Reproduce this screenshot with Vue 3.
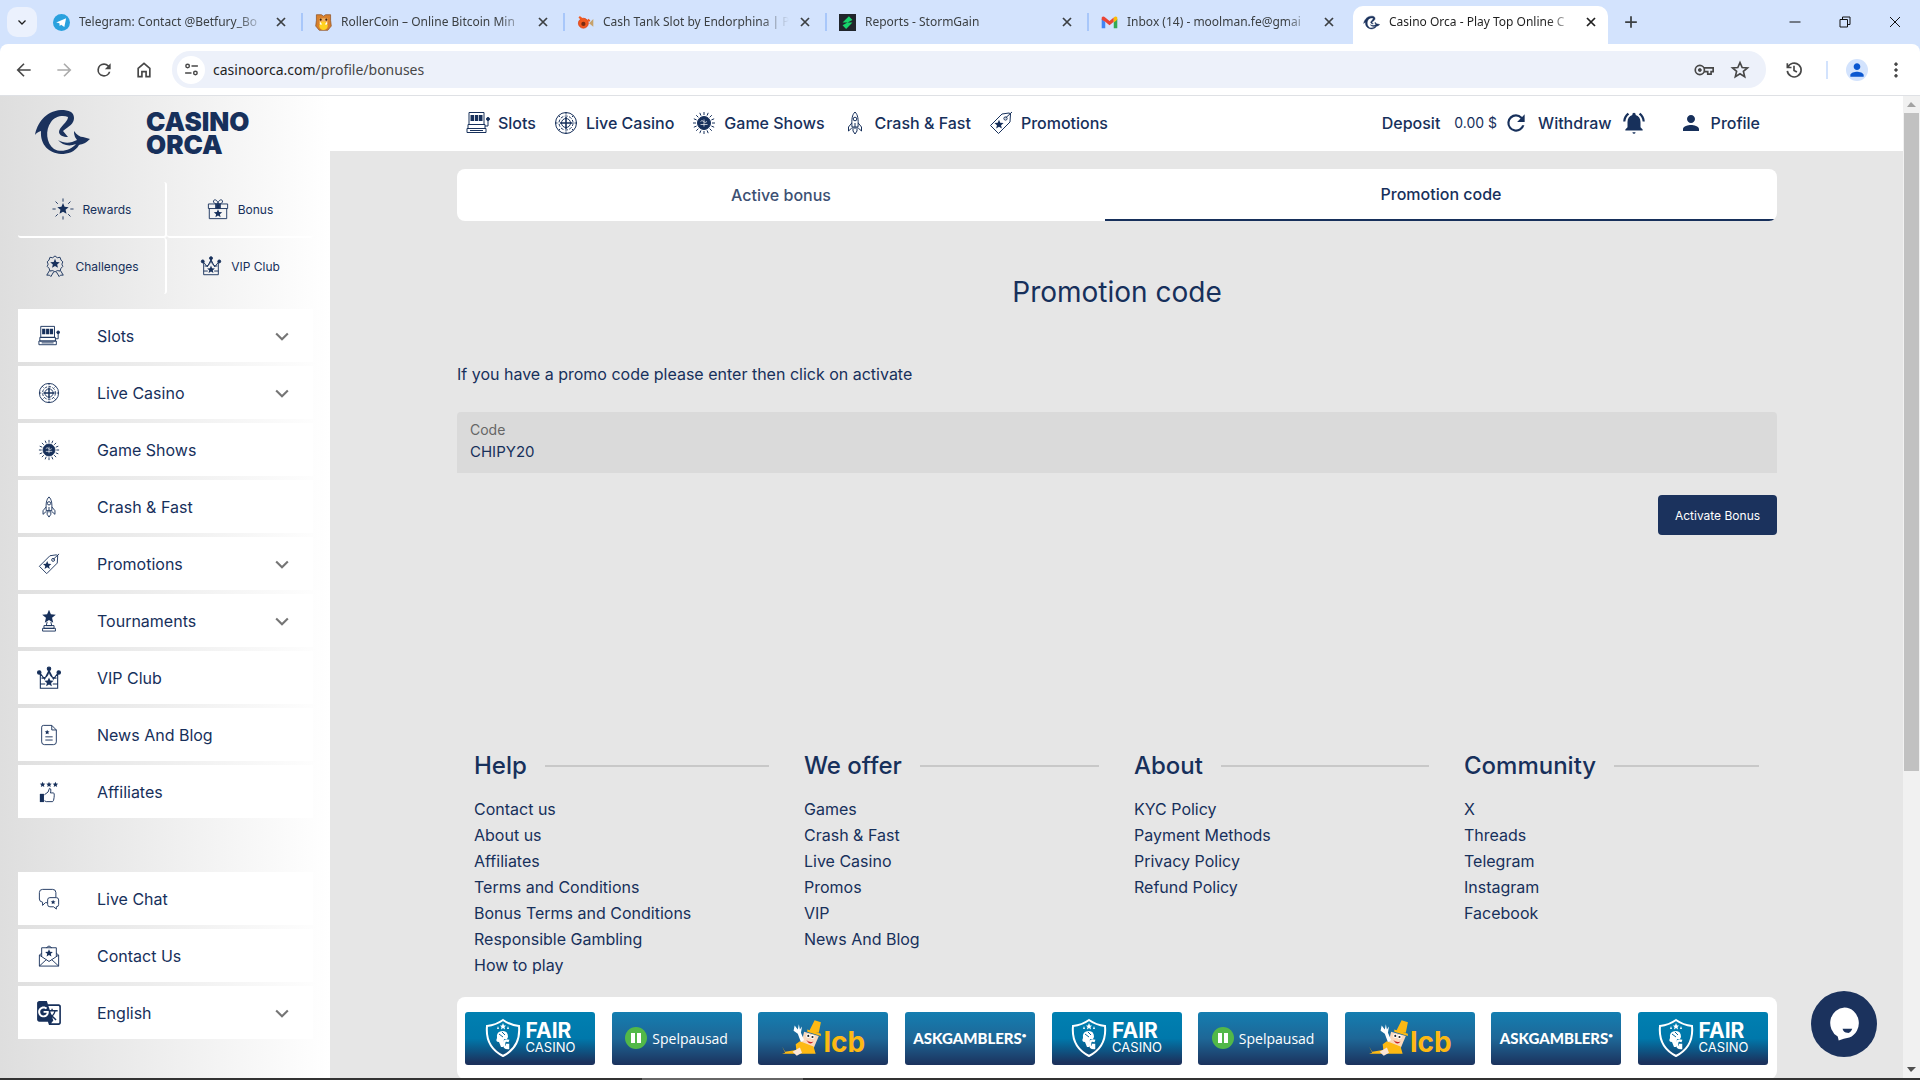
<script setup>
import { ref } from 'vue'

const code = ref('CHIPY20')

const star = (cx, cy, r) => {
  const pts = []
  for (let i = 0; i < 10; i++) {
    const a = (Math.PI / 5) * i - Math.PI / 2
    const d = i % 2 ? r * 0.45 : r
    pts.push((cx + d * Math.cos(a)).toFixed(2) + ',' + (cy + d * Math.sin(a)).toFixed(2))
  }
  return `<polygon points="${pts.join(' ')}" fill="currentColor" stroke="none"/>`
}

const rays = (count, from, to) => {
  let d = ''
  for (let i = 0; i < count; i++) {
    const a = (Math.PI * 2 * i) / count
    const c = Math.cos(a)
    const s = Math.sin(a)
    d += `M${(12 + from * c).toFixed(2)} ${(12 + from * s).toFixed(2)}L${(12 + to * c).toFixed(2)} ${(12 + to * s).toFixed(2)}`
  }
  return `<path d="${d}"/>`
}

const solid = (d) => `<path d="${d}" fill="currentColor" stroke="none"/>`

const orcaPath =
  'M0 25C2 14 10 1 26 0C34 0 39 2 39 8C39 14 34 16 28 21L33 27C28 27 24 25 24 22C24 17 33 12 33 7C28 5 20 6 16 12C10 20 11 33 19 39C26 43 36 40 41 34C34 37 27 35 23 30C30 34 36 33 42 30L40 27C39 24 39 23 39 21C42 25 45 27 48 27L55 29C51 33 48 34 44 35C40 42 33 44 26 44C14 43 5 35 6 21C3 22 1 23 0 25Z'

const crown =
  '<path d="M4 21.500V8l4 5 4-8 4 8 4-5v13.500zM4 17.500h4.500M15.500 17.500H20M5 12q5 1 7-6q2 7 7 6"/><circle cx="3" cy="7" r="1.600" fill="currentColor"/><circle cx="12" cy="3.500" r="1.600" fill="currentColor"/><circle cx="21" cy="7" r="1.600" fill="currentColor"/>' +
  star(12, 16, 4.5)

const icons = {
  rewards: rays(8, 8, 11.5) + star(12, 12, 6.5),
  bonus:
    '<path d="M1.500 6.500h21v5h-21zM2.500 11.500v11h19v-11M9.500 6.500v5M14.500 6.500v5M12 6.500C8 7 6 4 7.500 2.500S12 3 12 6.500C12 3 15 1 16.500 2.500S16 7 12 6.500"/><path d="M10 7h4v4h-4z" fill="currentColor"/>' +
    star(12, 17, 4.8),
  challenges:
    '<path d="M12 1l2.500 2 3-.5 1 3 2 2-1 2.500 1 2.500-2 2-1 3-3-.5-2.500 1.500-2.500-1.500-3 .5-1-3-2-2 1-2.500-1-2.500 2-2 1-3 3 .5zM6 17l-3 5h3l1.500 1.500 3-5M18 17l3 5h-3l-1.500 1.500-3-5"/>' +
    star(12, 9.5, 5.5),
  crown,
  slots:
    '<path d="M3 1.500h15v12H3zM2 13.500h17v4H2zM1 17.500h19v4H1zM4 19.500h13M19 15h3V8"/><circle cx="22" cy="8" r="1.500" fill="currentColor"/>' +
    solid('M4.500 4h3.500v6H4.500zM8.800 4h3.500v6H8.800zM13 4h3.500v6H13z'),
  live:
    '<circle cx="12" cy="12" r="10.500"/><circle cx="12" cy="12" r="7" stroke-dasharray="3 1.500"/><circle cx="12" cy="12" r="4.500"/><path d="M12 6v12M6 12h12" stroke-width="1.600"/>' +
    rays(8, 8.5, 10.5),
  shows:
    rays(16, 8, 11) +
    '<circle cx="12" cy="12" r="6.500" fill="currentColor"/><path d="M8.500 10.500q1.500-2 3 0t3.500 0M8.500 13.500h7M12 8.500v7" stroke="#fff" stroke-width=".7"/>',
  rocket:
    '<path d="M12 1c-3 3-3.500 7-3 15h6c.5-8 0-12-3-15zM8.800 12L5.500 16v4l3.300-3M15.200 12l3.300 4v4l-3.300-3M10 16v4l2 3 2-3v-4M12 12v6"/><circle cx="12" cy="8" r="1.800"/>',
  promo:
    '<path d="M1.500 14.500L13 3l7-1 1.500.8L21 11 9.500 22.500zM16.500 7L23 1"/><circle cx="16.500" cy="7.500" r="1.600"/>' +
    star(10, 13.5, 4.8),
  trophy:
    star(12, 7.5, 7.8) + '<path d="M10 13l-1 4h6l-1-4M6.500 17h11v3h-11zM5 20h14v3H5z"/>',
  news:
    '<path d="M4 3.500q0-2 2-2h9l5 5v13q0 3-3 3H7q-3 0-3-3zM15 1.500v5h5M8 14h8M8 17.500h8"/>' + star(10, 9, 2.8),
  affiliates:
    star(5, 4, 3.2) + star(12, 4, 3.2) + star(19, 4, 3.2) +
    '<path d="M7 15l4-3 1.500-4q2 0 1.500 3l-.5 2H17q1.500 1 0 8l-1 1.500H9l-2-1"/>' +
    solid('M2 14h4.500v9H2z'),
  chat:
    '<path d="M10 16H8l-3 3v-3.500Q1.500 15 1.500 12V5q0-3.500 3.500-3.500h11q3.500 0 3.500 3.500v5M13 10.500h7q2.500 0 2.500 2.500v5q0 2.500-2.500 2.500v2.500l-3-2.500h-4q-2.500 0-2.500-2.500v-5q0-2.500 2.500-2.500z"/>' +
    star(16.5, 15.5, 2.8),
  mail:
    '<path d="M4 9L1.500 11v12h21V11L20 9M4 12.500V3h16v9.500M1.500 11l10.500 7 10.500-7M1.500 23L9 16M22.500 23L15 16M9 3l3-2 3 2"/>' +
    star(12, 9, 4.5),
  translate: solid(
    'M21 4H11l-1-3H3c-1.100 0-2 .9-2 2v15c0 1.100.9 2 2 2h8l1 3h9c1.100 0 2-.9 2-2V6c0-1.100-.9-2-2-2zM7 16c-2.760 0-5-2.240-5-5s2.240-5 5-5c1.350 0 2.480.5 3.350 1.300L9.030 8.570c-.38-.36-1.040-.78-2.030-.78-1.740 0-3.150 1.440-3.150 3.210S5.260 14.210 7 14.210c2.010 0 2.840-1.440 2.920-2.410H7v-1.710h4.680c.07.31.12.61.12 1.020C11.800 13.970 9.890 16 7 16zm6.170-5.420h3.700c-.43 1.250-1.110 2.430-2.050 3.470-.31-.35-.6-.72-.86-1.100l-.79-2.370zm8.330 9.920c0 .55-.45 1-1 1H14l2-2.500-1.040-3.100 3.100 3.100.92-.92-3.300-3.250.02-.02c1.130-1.250 1.930-2.690 2.400-4.220H20v-1.300h-4.530V8h-1.290v1.290h-1.440L11.460 5.500h9.040c.55 0 1 .45 1 1v14z'
  ),
  refresh: solid(
    'M17.650 6.350A7.958 7.958 0 0 0 12 4a8 8 0 1 0 7.730 10h-2.080A6 6 0 1 1 12 6c1.660 0 3.140.69 4.220 1.780L13 11h7V4l-2.350 2.350z'
  ),
  bell: solid(
    'M7.580 4.080L6.150 2.650C3.750 4.480 2.170 7.300 2.030 10.500h2c.15-2.650 1.510-4.970 3.550-6.420zm12.390 6.420h2c-.15-3.200-1.730-6.020-4.120-7.850l-1.420 1.430c2.020 1.450 3.390 3.770 3.540 6.420zM18 11c0-3.070-1.640-5.640-4.500-6.320V4c0-.83-.67-1.500-1.500-1.500s-1.500.67-1.500 1.500v.68C7.630 5.360 6 7.920 6 11v5l-2 2v1h16v-1l-2-2v-5zM10.500 20.500h3q-.3 1.500-1.500 1.500t-1.500-1.500z'
  ),
  person: solid(
    'M12 12c2.210 0 4-1.790 4-4s-1.790-4-4-4-4 1.790-4 4 1.790 4 4 4zm0 2c-2.670 0-8 1.340-8 4v2h16v-2c0-2.660-5.330-4-8-4z'
  ),
  down: '<path d="M5 9l7 7 7-7" stroke-width="2.500"/>',
  back: '<path d="M20 12H5M12 4.500L4.500 12l7.500 7.500" stroke-width="2"/>',
  forward: '<path d="M4 12h15M12 4.500l7.500 7.500-7.500 7.500" stroke-width="2"/>',
  home: '<path d="M5 10l7-6 7 6v10h-4.500v-6h-5v6H5z" stroke-width="2"/>',
  tune:
    '<circle cx="6.500" cy="7" r="2.500" stroke-width="2"/><circle cx="17.500" cy="17" r="2.500" stroke-width="2"/><path d="M12 7h9M3 17h9" stroke-width="2"/>',
  key:
    '<circle cx="7" cy="12" r="5.500" stroke-width="2"/><circle cx="7" cy="12" r="1.800" fill="currentColor"/><path d="M12 9.500h11v4.500h-2.500v3h-4v-3H12" stroke-width="2"/>',
  bookmark:
    '<path d="M12 3l2.600 6 6.400.5-4.900 4.200 1.500 6.300L12 16.600 6.400 20l1.500-6.300L3 9.500 9.400 9z" stroke-width="2"/>',
  history:
    '<path d="M4 4v5h5M4.500 9A8.300 8.300 0 1 1 4 13M12 7v5.500l3.500 2" stroke-width="2"/>',
  dots:
    '<circle cx="12" cy="5" r="1.600" fill="currentColor"/><circle cx="12" cy="12" r="1.600" fill="currentColor"/><circle cx="12" cy="19" r="1.600" fill="currentColor"/>',
  cross: '<path d="M4 4l16 16M20 4L4 20" stroke-width="3.500"/>',
  thinCross: '<path d="M2 2l20 20M22 2L2 22" stroke-width="2"/>',
  plus: '<path d="M12 2v20M2 12h20" stroke-width="3"/>',
  minimize: '<path d="M1 12h22" stroke-width="2"/>',
  restore: '<path d="M2 7h15v15H2zM7 7V2h15v15h-5" stroke-width="2"/>',
  telegram:
    '<circle cx="12" cy="12" r="12" fill="#2aa1de" stroke="none"/><path d="M4.500 12L18.500 6l-2.500 12.500-4.500-3.500-2 2-.5-4z" fill="#fff" stroke="none"/>',
  hamster:
    '<path d="M2 1h7l3 2 3-2h7v8l1 8-5 6H6l-5-6 1-8z" fill="#d8802c" stroke="#8b4e20"/><path d="M6 6h12v6H6z" fill="#f2b05a" stroke="none"/><circle cx="8" cy="8" r="1.500" fill="#3b1f0c" stroke="none"/><circle cx="16" cy="8" r="1.500" fill="#3b1f0c" stroke="none"/><circle cx="12" cy="16.500" r="6" fill="#ffd21f" stroke="none"/><path d="M7 12l2 3M17 12l-2 3" stroke="#fff" stroke-width="2"/>',
  slotFish:
    '<circle cx="9" cy="13" r="7" fill="#f0591f" stroke="#d63c17"/><circle cx="9" cy="14" r="3" fill="#7a2b12" stroke="none"/><path d="M3 4l5 4M15 8l3 2" stroke="#f0591f" stroke-width="3"/><path d="M17 13l6-6v11z" fill="#c7a26b" stroke="none"/>',
  storm:
    '<path d="M0 0h24v24H0z" fill="#20252b" stroke="none"/><path d="M14 3L5 12h7L19 8.500zM10 21l9-9h-7l-7 4z" fill="#17d46b" stroke="none"/>',
  gmail:
    '<path d="M1 20V7l5 4v9z" fill="#4285f4" stroke="none"/><path d="M18 20v-9l5-4v13z" fill="#34a853" stroke="none"/><path d="M1 8V5q2-3 5 0l6 5 6-5v6l-6 5-6-5z" fill="#ea4335" stroke="none"/><path d="M18 5q3-3 5 0v3l-5 4z" fill="#fbbc04" stroke="none"/>',
  orca: `<path transform="translate(1 3) scale(.41)" d="${orcaPath}" fill="#1b325d" stroke="#1b325d" stroke-width="1.500"/>`,
}

const tabs = [
  { icon: 'telegram', title: 'Telegram: Contact @Betfury_Bo' },
  { icon: 'hamster', title: 'RollerCoin – Online Bitcoin Min' },
  { icon: 'slotFish', title: 'Cash Tank Slot by Endorphina | P' },
  { icon: 'storm', title: 'Reports - StormGain' },
  { icon: 'gmail', title: 'Inbox (14) - moolman.fe@gmai' },
  { icon: 'orca', title: 'Casino Orca - Play Top Online C', active: true },
]

const quick = [
  { icon: 'rewards', label: 'Rewards' },
  { icon: 'bonus', label: 'Bonus' },
  { icon: 'challenges', label: 'Challenges' },
  { icon: 'crown', label: 'VIP Club' },
]

const menus = [
  [
    { icon: 'slots', label: 'Slots', open: true },
    { icon: 'live', label: 'Live Casino', open: true },
    { icon: 'shows', label: 'Game Shows' },
    { icon: 'rocket', label: 'Crash & Fast' },
    { icon: 'promo', label: 'Promotions', open: true },
    { icon: 'trophy', label: 'Tournaments', open: true },
    { icon: 'crown', label: 'VIP Club', big: true },
    { icon: 'news', label: 'News And Blog' },
    { icon: 'affiliates', label: 'Affiliates' },
  ],
  [
    { icon: 'chat', label: 'Live Chat' },
    { icon: 'mail', label: 'Contact Us' },
    { icon: 'translate', label: 'English', open: true, big: true },
  ],
]

const topNav = menus[0].slice(0, 5)

const columns = [
  {
    title: 'Help',
    links: ['Contact us', 'About us', 'Affiliates', 'Terms and Conditions', 'Bonus Terms and Conditions', 'Responsible Gambling', 'How to play'],
  },
  { title: 'We offer', links: ['Games', 'Crash & Fast', 'Live Casino', 'Promos', 'VIP', 'News And Blog'] },
  { title: 'About', links: ['KYC Policy', 'Payment Methods', 'Privacy Policy', 'Refund Policy'] },
  { title: 'Community', links: ['X', 'Threads', 'Telegram', 'Instagram', 'Facebook'] },
]

const partners = ['fair', 'spel', 'lcb', 'ask', 'fair', 'spel', 'lcb', 'ask', 'fair']
</script>

<template>
  <div class="window">
    <div class="tabstrip">
      <button class="tab-search" aria-label="Search tabs"><svg class="ico s12" viewBox="0 0 24 24" v-html="icons.down"></svg></button>
      <div class="tabs">
        <div v-for="t in tabs" :key="t.title" class="tab" :class="{ active: t.active }">
          <svg class="ico s17" viewBox="0 0 24 24" v-html="icons[t.icon]"></svg>
          <span class="tab-title">{{ t.title }}</span>
          <button class="plain" aria-label="Close tab"><svg class="ico s12" viewBox="0 0 24 24" v-html="icons.cross"></svg></button>
        </div>
      </div>
      <button class="plain new-tab" aria-label="New tab"><svg class="ico s14" viewBox="0 0 24 24" v-html="icons.plus"></svg></button>
      <div class="win-controls">
        <button class="plain" aria-label="Minimize"><svg class="ico s12" viewBox="0 0 24 24" v-html="icons.minimize"></svg></button>
        <button class="plain" aria-label="Restore"><svg class="ico s12" viewBox="0 0 24 24" v-html="icons.restore"></svg></button>
        <button class="plain" aria-label="Close"><svg class="ico s12" viewBox="0 0 24 24" v-html="icons.thinCross"></svg></button>
      </div>
    </div>

    <div class="toolbar">
      <div class="nav-buttons">
        <button class="plain" aria-label="Back"><svg class="ico s20" viewBox="0 0 24 24" v-html="icons.back"></svg></button>
        <button class="plain dim" aria-label="Forward"><svg class="ico s20" viewBox="0 0 24 24" v-html="icons.forward"></svg></button>
        <button class="plain" aria-label="Reload"><svg class="ico s20" viewBox="0 0 24 24" v-html="icons.refresh"></svg></button>
        <button class="plain" aria-label="Home"><svg class="ico s20" viewBox="0 0 24 24" v-html="icons.home"></svg></button>
      </div>
      <div class="omnibox">
        <span class="site-info"><svg class="ico s17" viewBox="0 0 24 24" v-html="icons.tune"></svg></span>
        <span class="url"><b>casinoorca.com</b>/profile/bonuses</span>
        <svg class="ico s20" viewBox="0 0 24 24" v-html="icons.key"></svg>
        <svg class="ico s20" viewBox="0 0 24 24" v-html="icons.bookmark"></svg>
      </div>
      <div class="toolbar-end">
        <button class="plain" aria-label="History"><svg class="ico s20" viewBox="0 0 24 24" v-html="icons.history"></svg></button>
        <span class="divider"></span>
        <button class="plain avatar" aria-label="Account"><svg class="ico s20" viewBox="0 0 24 24" v-html="icons.person"></svg></button>
        <button class="plain" aria-label="Menu"><svg class="ico s20" viewBox="0 0 24 24" v-html="icons.dots"></svg></button>
      </div>
    </div>

    <div class="page">
      <aside class="sidebar">
        <a class="brand" href="#">
          <svg class="orca" viewBox="0 0 55 44"><path :d="orcaPath" fill="#1b325d" /></svg>
          <span class="brand-name">CASINO<br />ORCA</span>
        </a>
        <nav class="quick">
          <a v-for="q in quick" :key="q.label" href="#">
            <svg class="ico s22" viewBox="0 0 24 24" v-html="icons[q.icon]"></svg>
            <span>{{ q.label }}</span>
          </a>
        </nav>
        <nav v-for="(group, i) in menus" :key="i" class="menu">
          <a v-for="m in group" :key="m.label" href="#">
            <span class="menu-icon"><svg class="ico" :class="m.big ? 's26' : 's22'" viewBox="0 0 24 24" v-html="icons[m.icon]"></svg></span>
            <span class="menu-label">{{ m.label }}</span>
            <svg v-if="m.open" class="ico s20 chevron" viewBox="0 0 24 24" v-html="icons.down"></svg>
          </a>
        </nav>
      </aside>

      <div class="content">
        <header class="topbar">
          <nav class="topnav">
            <a v-for="n in topNav" :key="n.label" href="#">
              <svg class="ico s24" viewBox="0 0 24 24" v-html="icons[n.icon]"></svg>{{ n.label }}
            </a>
          </nav>
          <div class="account">
            <a href="#">Deposit</a>
            <span class="balance">0.00 $</span>
            <button class="plain" aria-label="Refresh balance"><svg class="ico s26" viewBox="0 0 24 24" v-html="icons.refresh"></svg></button>
            <a class="withdraw" href="#">Withdraw</a>
            <button class="plain" aria-label="Notifications"><svg class="ico s26" viewBox="0 0 24 24" v-html="icons.bell"></svg></button>
            <a class="profile" href="#"><svg class="ico s24" viewBox="0 0 24 24" v-html="icons.person"></svg>Profile</a>
          </div>
        </header>

        <main class="main">
          <div class="switch" role="tablist">
            <button role="tab" aria-selected="false">Active bonus</button>
            <button role="tab" aria-selected="true" class="current">Promotion code</button>
          </div>
          <h1>Promotion code</h1>
          <p class="intro">If you have a promo code please enter then click on activate</p>
          <form @submit.prevent>
            <div class="field">
              <label for="code">Code</label>
              <input id="code" v-model="code" type="text" />
            </div>
            <button class="activate" type="submit">Activate Bonus</button>
          </form>

          <footer>
            <div class="columns">
              <section v-for="c in columns" :key="c.title">
                <h2>{{ c.title }}</h2>
                <ul>
                  <li v-for="l in c.links" :key="l"><a href="#">{{ l }}</a></li>
                </ul>
              </section>
            </div>
            <div class="partners">
              <a v-for="(p, i) in partners" :key="i" href="#" class="partner" :class="p">
                <template v-if="p === 'fair'">
                  <svg class="shield" viewBox="0 0 36 40">
                    <path d="M18 2Q25 7 34 8Q36 29 18 38Q0 29 2 8Q11 7 18 2Z" fill="none" stroke="#fff" stroke-width="2" />
                    <path d="M18 5l1 2.500h2l-1.500 1.500.5 2.500-2-1.500-2 1.500.5-2.500L15 7.500h2zM13 8l1 3h-2zM23 8l1 3h-2z" fill="#fff" />
                    <path d="M12 20q-1-7 6-7 5 0 5 6l-1 2h-3l-1 8h-2l-2-5q-4 0-2-4z" fill="#fff" />
                    <path d="M24 23q-5-2-5 3 0 4 4 4v-3h-2" fill="none" stroke="#fff" stroke-width="2.500" />
                    <path d="M14 16l4 3M17 14l3 3" fill="none" stroke="#08669b" />
                  </svg>
                  <span class="fair-text"><b>FAIR</b>CASINO</span>
                </template>
                <template v-else-if="p === 'spel'">
                  <svg class="s22" viewBox="0 0 22 22"><circle cx="11" cy="11" r="11" fill="#52b848" /><path d="M6 6h4v10H6zM12 6h4v10h-4z" fill="#fff" /></svg>
                  <span>Spelpausad</span>
                </template>
                <template v-else-if="p === 'lcb'">
                  <svg class="mascot" viewBox="0 0 40 34">
                    <path d="M27 10L32 0l6 2-2 10zM25 9l13 4v2l-13-4z" fill="#fdb913" />
                    <path d="M22 11l14 4-5 12-12-3z" fill="#fbd9bd" />
                    <path d="M14 23l4-3 13 5 2 7H15zM1 25l3 5 13-2v4H1l3-1z" fill="#fdb913" />
                    <path d="M13 5l3 4 1-5 1 5 2-3-1 6 3 7-3 2-3-8-4-3z" fill="#fff" />
                    <circle cx="26" cy="15" r="2" fill="#fff" /><circle cx="30" cy="16" r="2" fill="#fff" />
                    <circle cx="26" cy="15" r="1" fill="#222" /><circle cx="30" cy="16" r="1" fill="#222" />
                    <path d="M24 19q4 3 7 1-3 5-7-1z" fill="#c22" />
                    <path d="M11 30l7-4 2 5-5 3z" fill="#fbe6d6" />
                  </svg>
                  <b class="lcb-text">lcb</b>
                </template>
                <b v-else class="ask-text">ASKGAMBLERS<sup>•</sup></b>
              </a>
            </div>
          </footer>
        </main>
      </div>

      <div class="scrollbar">
        <svg class="arrow" viewBox="0 0 17 17"><path d="M4 11h9L8 6z" fill="#a3a3a3" /></svg>
        <div class="thumb"></div>
        <svg class="arrow" viewBox="0 0 17 17"><path d="M4 6h9l-5 5z" fill="#505050" /></svg>
      </div>

      <button class="chat" aria-label="Open chat">
        <svg viewBox="0 0 32 34"><path d="M16 0a15 16 0 0 1 5 31Q15 32 10 34L9 30A15 16 0 0 1 16 0z" fill="#fff" /><path d="M14 22h10q-2 5-5 4-4 0-5-4z" fill="#1b325d" /></svg>
      </button>
    </div>
    <div class="taskbar"><span></span></div>
  </div>
</template>

<style>
body {
  margin: 0;
  overflow: hidden;
}
</style>

<style scoped>
.window {
  height: 100vh;
  display: flex;
  flex-direction: column;
  overflow: hidden;
  background: #d3e3fd;
  color: #17305b;
  font-family: Inter, "Liberation Sans", sans-serif;
  font-size: 16px;
}
.window * { box-sizing: border-box; }
a { color: inherit; text-decoration: none; }
button { font-family: inherit; cursor: pointer; }
.plain {
  display: flex;
  align-items: center;
  justify-content: center;
  padding: 0;
  border: 0;
  background: none;
  color: inherit;
}
.ico {
  flex: none;
  fill: none;
  stroke: currentColor;
  stroke-width: 1;
}
.s12 { width: 12px; height: 12px; }
.s14 { width: 14px; height: 14px; }
.s17 { width: 17px; height: 17px; }
.s20 { width: 20px; height: 20px; }
.s22 { width: 22px; height: 22px; }
.s24 { width: 24px; height: 24px; }
.s26 { width: 26px; height: 26px; }

/* browser tabs */
.tabstrip {
  flex: none;
  height: 44px;
  display: flex;
  align-items: center;
  padding-left: 7px;
  color: #3c4043;
  font-family: "Noto Sans", "Open Sans", sans-serif;
  font-size: 12px;
}
.tab-search {
  width: 30px;
  height: 30px;
  padding: 0;
  border: 0;
  border-radius: 10px;
  background: #ebf1fd;
  color: #1f1f1f;
  display: flex;
  align-items: center;
  justify-content: center;
}
.tabs {
  display: flex;
  margin-left: 4px;
  align-self: stretch;
}
.tab {
  position: relative;
  width: 262px;
  display: flex;
  align-items: center;
  padding: 0 16px 0 12px;
}
.tab:not(.active)::after {
  content: "";
  position: absolute;
  right: 0;
  top: 13px;
  width: 2px;
  height: 18px;
  background: #a8c7fa;
}
.tab:nth-last-child(2)::after { display: none; }
.tab-title {
  flex: 1;
  margin: 0 10px 0 9px;
  overflow: hidden;
  white-space: nowrap;
  line-height: 20px;
  mask-image: linear-gradient(90deg, #000 85%, transparent);
}
.tab.active { color: #1f1f1f; }
.tab.active::before {
  content: "";
  position: absolute;
  inset: 6px 5px 0 2px;
  border-radius: 10px 10px 0 0;
  background: #fff;
}
.tab.active > * { position: relative; }
.new-tab { margin-left: 11px; }
.win-controls {
  margin-left: auto;
  display: flex;
  gap: 38px;
  padding-right: 19px;
  color: #111;
}

/* browser toolbar */
.toolbar {
  flex: none;
  height: 52px;
  display: flex;
  align-items: center;
  padding: 0 14px;
  background: #fff;
  border-bottom: 1px solid #dfe1e5;
  border-radius: 8px 8px 0 0;
  color: #474747;
}
.nav-buttons { display: flex; gap: 20px; }
.dim { color: #ababab; }
.omnibox {
  flex: 1;
  height: 37px;
  display: flex;
  align-items: center;
  margin-left: 18px;
  padding: 0 16px 0 5px;
  border-radius: 18px;
  background: #edf1fa;
  gap: 16px;
}
.site-info {
  width: 28px;
  height: 28px;
  display: flex;
  align-items: center;
  justify-content: center;
  border-radius: 50%;
  background: #fff;
}
.url {
  flex: 1;
  margin-left: -8px;
  font-family: "Noto Sans", "Open Sans", sans-serif;
  font-size: 14px;
  color: #474747;
}
.url b { font-weight: 400; color: #1f1f1f; }
.toolbar-end {
  display: flex;
  align-items: center;
  gap: 18px;
  margin-left: 18px;
}
.divider { width: 2px; height: 18px; margin-left: 4px; background: #d3e3fd; }
.avatar {
  width: 22px;
  height: 22px;
  border-radius: 50%;
  background: #d3e3fd;
  color: #0b57d0;
}

/* page */
.page {
  position: relative;
  flex: 1;
  min-height: 0;
  display: flex;
  overflow: hidden;
  background: #e6e6e6;
}
.sidebar {
  flex: none;
  width: 330px;
  padding: 14px 17px 0 18px;
  background: linear-gradient(90deg, #dedede, #fff);
}
.brand {
  display: flex;
  gap: 56px;
  padding-left: 17px;
  height: 72px;
}
.orca { width: 55px; height: 44px; }
.brand-name {
  font-size: 26px;
  font-weight: 900;
  line-height: 23px;
}
.quick {
  display: grid;
  grid-template-columns: 149px 1fr;
  font-size: 12px;
}
.quick a {
  height: 56px;
  display: flex;
  align-items: center;
  justify-content: center;
  gap: 9px;
}
.quick a:nth-child(odd) { border-right: 2px solid #fff; border-radius: 3px; }
.quick a:nth-child(-n + 2) { border-bottom: 2px solid #fff; border-radius: 3px; }
.menu {
  display: flex;
  flex-direction: column;
  gap: 4px;
  margin-top: 15px;
}
.menu + .menu { margin-top: 54px; }
.menu a {
  height: 53px;
  display: flex;
  align-items: center;
  padding: 0 21px 0 16px;
  background: #fff;
}
.menu-icon {
  width: 30px;
  display: flex;
  justify-content: center;
}
.menu-label { flex: 1; margin-left: 33px; }
.chevron { color: #757575; }

.content { flex: 1; min-width: 0; }
.topbar {
  height: 55px;
  display: flex;
  align-items: center;
  justify-content: space-between;
  padding: 0 143px 2px 136px;
  background: #fff;
  font-weight: 500;
}
.topnav { display: flex; gap: 18px; }
.topnav a, .profile { display: flex; align-items: center; gap: 8px; white-space: nowrap; }
.account { display: flex; align-items: center; white-space: nowrap; }
.balance { margin: 0 6px 0 14px; font-size: 14px; font-weight: 400; }
.withdraw { margin: 0 9px; }
.profile { margin-left: 32px; }

.main { padding: 18px 126px 0 127px; }
.switch {
  display: flex;
  height: 52px;
  border-radius: 8px;
  background: #fff;
  overflow: hidden;
}
.switch button {
  flex: 648;
  padding: 0;
  border: 0;
  background: none;
  color: #3c5073;
  font-size: 16px;
  font-weight: 500;
}
.switch .current {
  flex: 672;
  color: #17305b;
  border-bottom: 2px solid #17305b;
}
h1 {
  margin: 50px 0 49px;
  font-size: 28px;
  font-weight: 400;
  line-height: 42px;
  text-align: center;
}
.intro { margin: 0 0 26px; line-height: 24px; }
form { display: flex; flex-direction: column; }
.field {
  height: 61px;
  display: flex;
  flex-direction: column;
  padding: 9px 13px;
  border-radius: 4px 4px 0 0;
  background: #dadada;
}
.field label { color: #666; font-size: 14px; line-height: 18px; }
.field input {
  height: 24px;
  padding: 0;
  border: 0;
  outline: 0;
  background: none;
  color: inherit;
  font-family: inherit;
  font-size: 15px;
}
.activate {
  align-self: flex-end;
  width: 119px;
  height: 40px;
  margin-top: 22px;
  padding: 0;
  border: 0;
  border-radius: 4px;
  background: #1b325d;
  color: #fff;
  font-size: 12px;
}
footer { margin-top: 215px; }
.columns {
  display: grid;
  grid-template-columns: repeat(4, 1fr);
  gap: 35px;
  padding: 0 18px 0 17px;
}
h2 {
  display: flex;
  align-items: center;
  gap: 18px;
  margin: 0 0 14px;
  font-size: 24px;
  font-weight: 500;
  line-height: 32px;
  white-space: nowrap;
}
h2::after { content: ""; flex: 1; height: 2px; background: #c8c8c8; }
ul { margin: 0; padding: 0; list-style: none; }
li { line-height: 26px; }
.partners {
  height: 82px;
  display: flex;
  justify-content: space-between;
  align-items: center;
  margin-top: 19px;
  padding: 0 9px 0 8px;
  border-radius: 8px;
  background: #fff;
}
.partner {
  width: 130px;
  height: 53px;
  display: flex;
  align-items: center;
  justify-content: center;
  gap: 5px;
  border-radius: 3px;
  background: linear-gradient(#147eb1, #1e6797 50%, #1b325d);
  color: #fff;
}
.fair { background: linear-gradient(#0080b1, #0078ab 50%, #1b325d 95%); }
.shield { width: 36px; height: 40px; }
.fair-text { font-size: 13px; line-height: 15px; }
.fair-text b { display: block; font-size: 21px; line-height: 19px; }
.spel { font-family: "Open Sans", sans-serif; font-size: 14px; }
.lcb { gap: 0; color: #fdb913; }
.mascot { width: 42px; height: 36px; }
.lcb-text { font-size: 28px; font-weight: 700; line-height: 30px; padding-top: 8px; }
.ask-text { font-family: Lato, sans-serif; font-size: 15px; font-weight: 900; white-space: nowrap; }
.ask-text sup { font-size: 8px; }

.scrollbar {
  flex: none;
  width: 17px;
  display: flex;
  flex-direction: column;
  background: #f1f1f1;
}
.arrow { width: 17px; height: 17px; }
.thumb { flex: none; height: 67%; margin: 0 1px auto; background: #c1c1c1; }
.chat {
  position: absolute;
  right: 43px;
  bottom: 21px;
  width: 66px;
  height: 66px;
  display: flex;
  align-items: center;
  justify-content: center;
  padding: 0;
  border: 0;
  border-radius: 50%;
  background: #1b325d;
}
.chat svg { width: 31px; height: 34px; }
.taskbar { flex: none; height: 2px; background: #333; }
.taskbar span {
  display: block;
  width: 161px;
  height: 2px;
  margin-left: 642px;
  background: #666;
}
</style>
